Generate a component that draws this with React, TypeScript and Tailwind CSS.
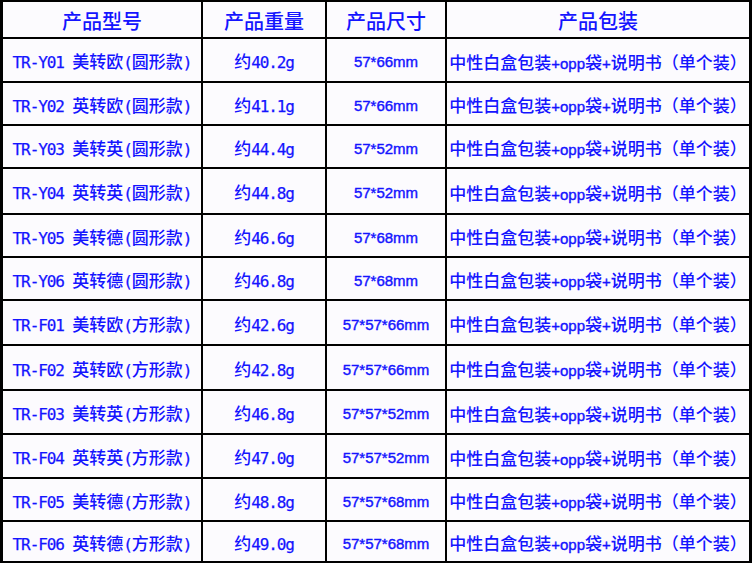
import React from "react"

const rows = [
  ["TR-Y01 美转欧(圆形款)", "约40.2g", "57*66mm"],
  ["TR-Y02 英转欧(圆形款)", "约41.1g", "57*66mm"],
  ["TR-Y03 美转英(圆形款)", "约44.4g", "57*52mm"],
  ["TR-Y04 英转英(圆形款)", "约44.8g", "57*52mm"],
  ["TR-Y05 美转德(圆形款)", "约46.6g", "57*68mm"],
  ["TR-Y06 英转德(圆形款)", "约46.8g", "57*68mm"],
  ["TR-F01 美转欧(方形款)", "约42.6g", "57*57*66mm"],
  ["TR-F02 英转欧(方形款)", "约42.8g", "57*57*66mm"],
  ["TR-F03 美转英(方形款)", "约46.8g", "57*57*52mm"],
  ["TR-F04 英转英(方形款)", "约47.0g", "57*57*52mm"],
  ["TR-F05 美转德(方形款)", "约48.8g", "57*57*68mm"],
  ["TR-F06 英转德(方形款)", "约49.0g", "57*57*68mm"],
]

const packing = "中性白盒包装+opp袋+说明书（单个装）"

// split ascii runs so latin and CJK can use different fonts
function Mixed({ text, latin }: { text: string; latin: string }) {
  return (
    <span className="whitespace-pre">
      {text.split(/([\x20-\x7e]+)/).map((part, i) =>
        /^[\x20-\x7e]+$/.test(part) ? (
          <span key={i} className={latin}>
            {part}
          </span>
        ) : (
          <span key={i}>{part}</span>
        )
      )}
    </span>
  )
}

const mono = "font-['DejaVu_Sans_Mono'] text-[16px] tracking-[-1.1px] font-normal [-webkit-text-stroke:0.25px]"
const sans = "font-['Liberation_Sans'] text-[15px] font-normal [-webkit-text-stroke:0.4px]"
const cell = "bg-[#fcfbfe] flex items-center justify-center whitespace-nowrap pt-[3px]"

export default function App() {
  return (
    <div className="w-[754px] h-[565px] bg-white">
      <div className="w-[752px] h-[563px] border-x-[3px] border-y-2 border-black bg-black grid grid-cols-[198px_122px_118px_302px] grid-rows-[35px_42px_41px_41px_44px_41px_41px_43px_43px_42px_42px_41px_39px] gap-[2px] font-['Noto_Sans_CJK_SC',sans-serif] font-medium text-[17px] text-[#1414ff] leading-none">
        <div className={cell + " text-[20px] pt-0"}>产品型号</div>
        <div className={cell + " text-[20px] pt-0"}>产品重量</div>
        <div className={cell + " text-[20px] pt-0"}>产品尺寸</div>
        <div className={cell + " text-[20px] pt-0"}>产品包装</div>
        {rows.map((r) => (
          <React.Fragment key={r[0]}>
            <div className={cell}>
              <Mixed text={r[0]} latin={mono} />
            </div>
            <div className={cell}>
              <Mixed text={r[1]} latin={mono} />
            </div>
            <div className={cell}>
              <span className={sans}>{r[2]}</span>
            </div>
            <div className={cell}>
              <Mixed text={packing} latin={sans} />
            </div>
          </React.Fragment>
        ))}
      </div>
    </div>
  )
}
